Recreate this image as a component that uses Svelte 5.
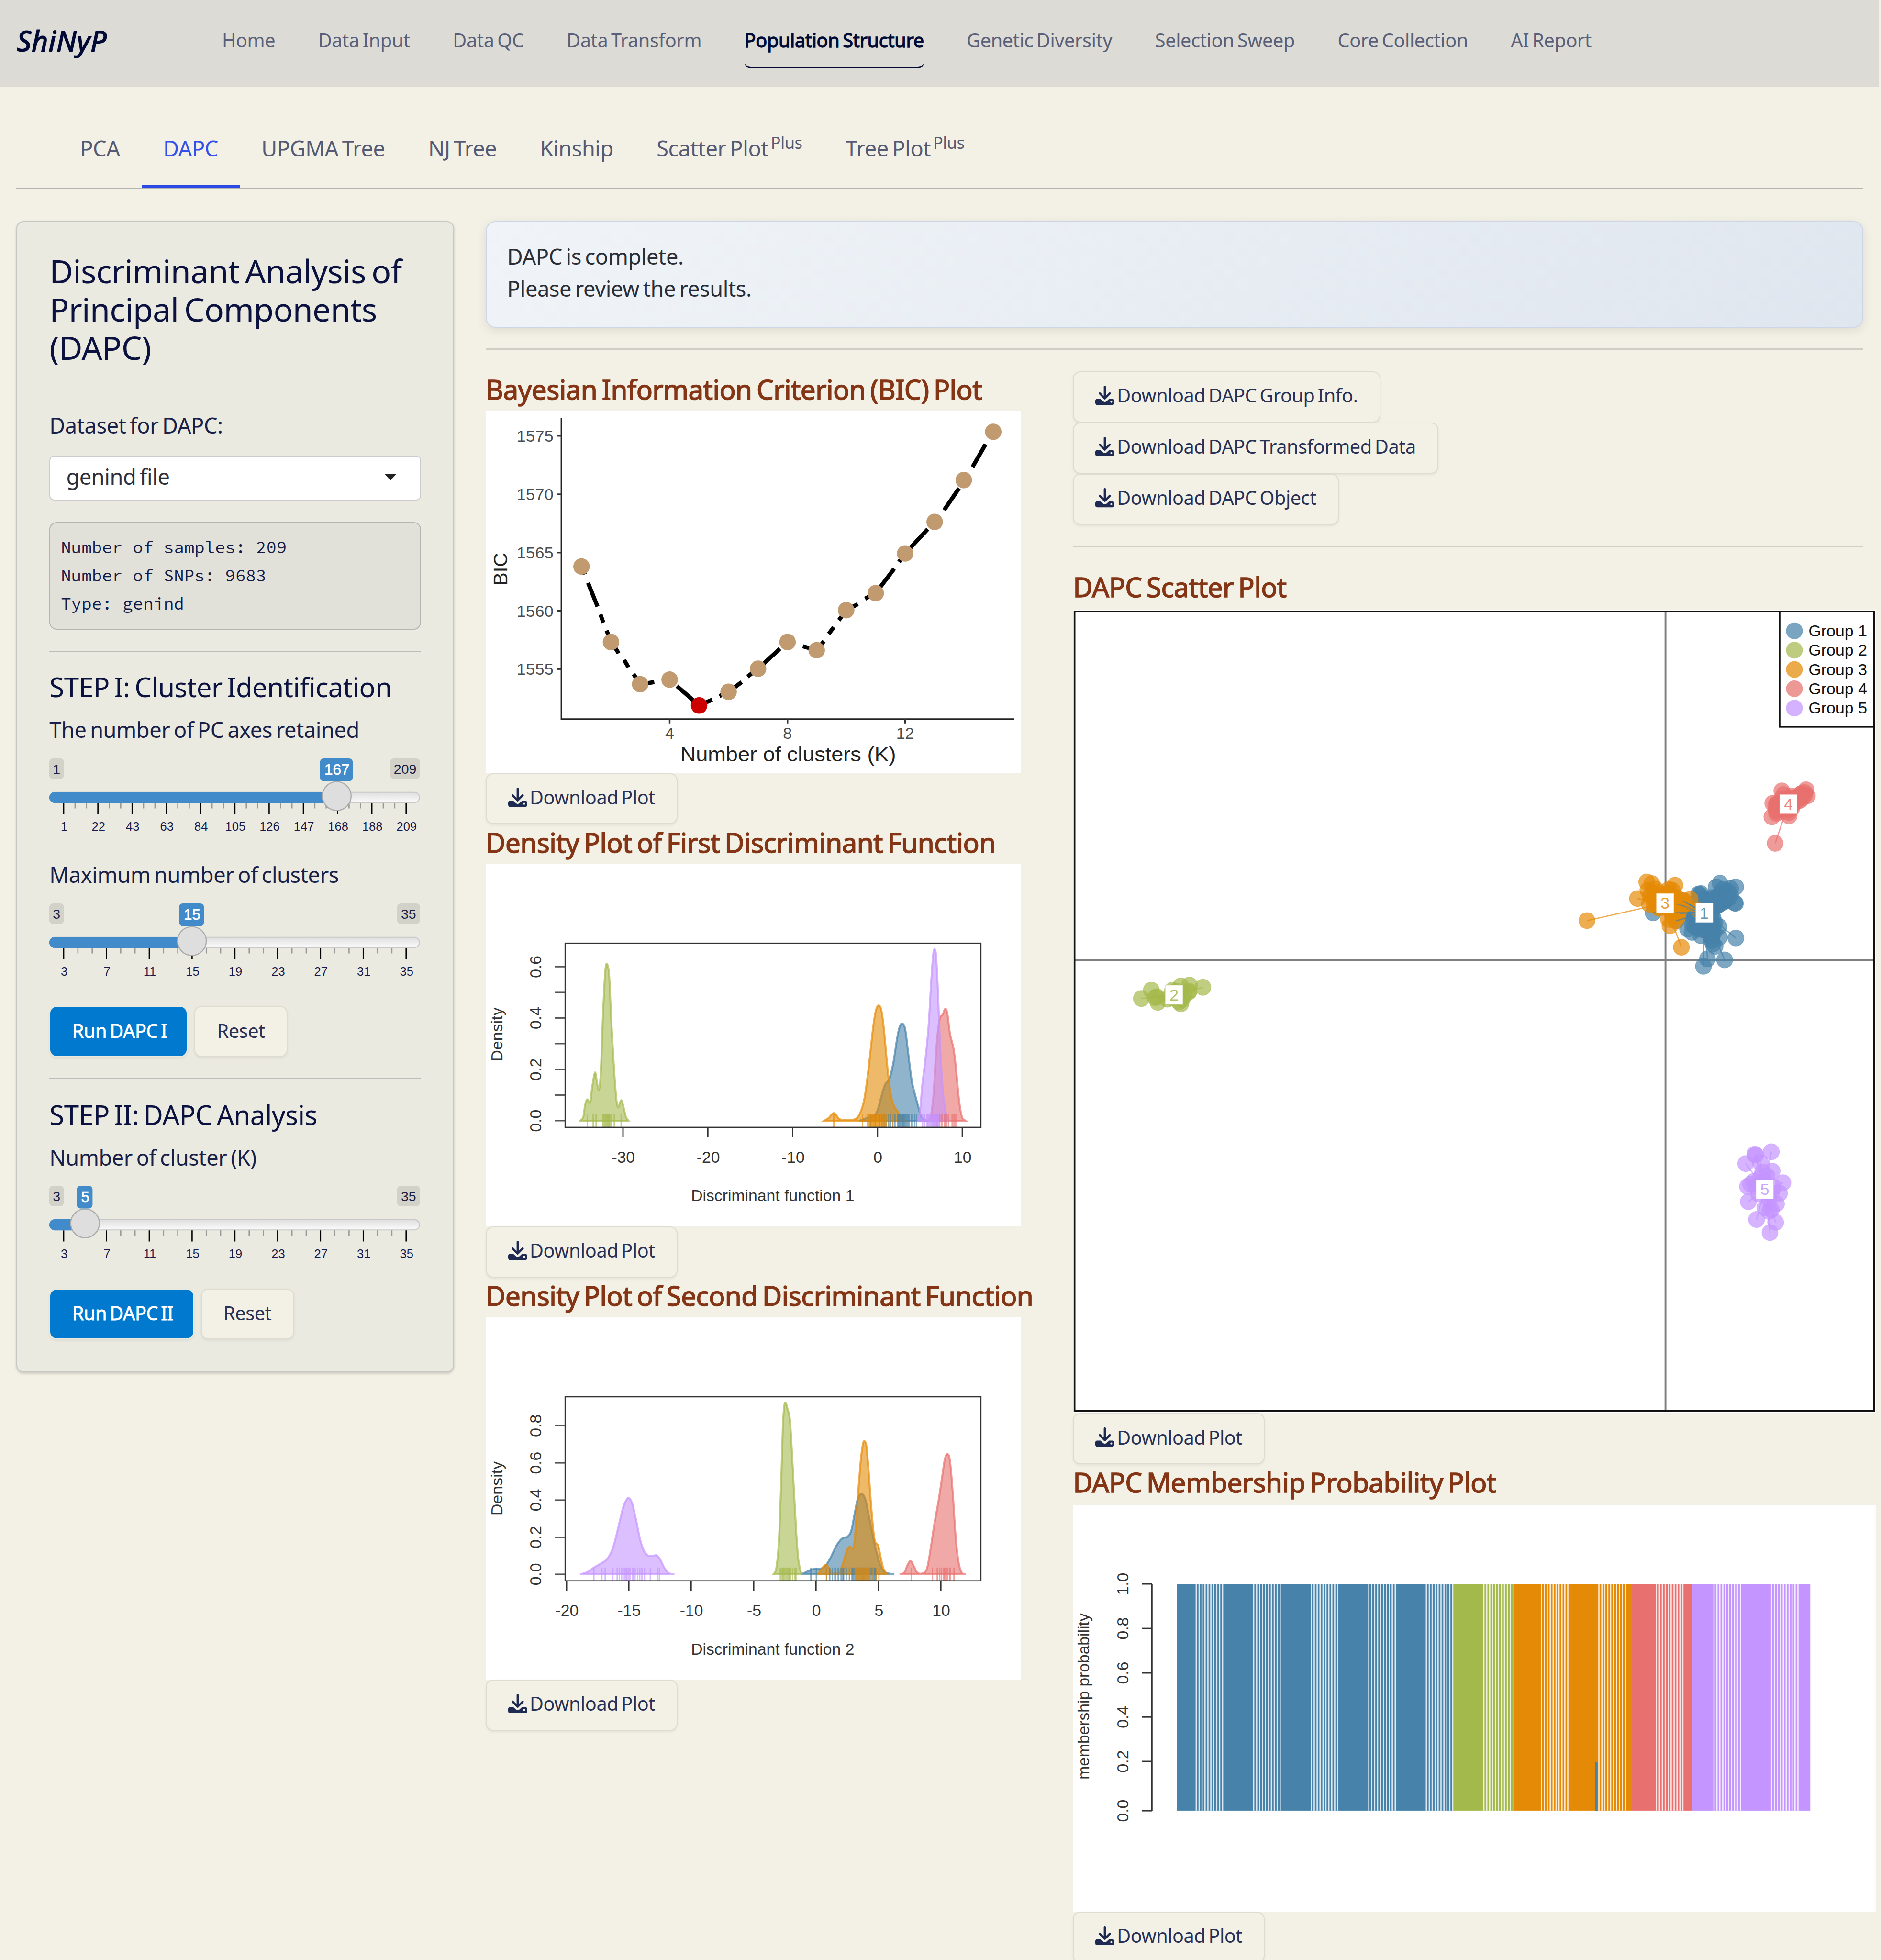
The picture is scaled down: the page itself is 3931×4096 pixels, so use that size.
<script>
  const nav = ['Home', 'Data Input', 'Data QC', 'Data Transform', 'Population Structure', 'Genetic Diversity', 'Selection Sweep', 'Core Collection', 'AI Report'];
  const tabs = [
    { name: 'PCA' }, { name: 'DAPC' }, { name: 'UPGMA Tree' }, { name: 'NJ Tree' }, { name: 'Kinship' },
    { name: 'Scatter Plot', sup: 'Plus' }, { name: 'Tree Plot', sup: 'Plus' }
  ];

  const pcAxes = { min: '1', max: '209', value: '167', at: 230, tag: 26.2, minW: 11.7, maxW: 23.8, labels: [1, 22, 43, 63, 84, 105, 126, 147, 168, 188, 209] };
  const odd = [3, 7, 11, 15, 19, 23, 27, 31, 35];
  const maxClusters = { min: '3', max: '35', value: '15', at: 114.1, tag: 19.9, minW: 11.7, maxW: 18.3, labels: odd };
  const nCluster = { min: '3', max: '35', value: '5', at: 28.6, tag: 12.6, minW: 11.7, maxW: 18.3, labels: odd };

  const BLUE = '#4682a9', GREEN = '#a4b94c', ORANGE = '#e58a06', RED = '#e8706e', PURPLE = '#c494ff';
  const groups = [BLUE, GREEN, ORANGE, RED, PURPLE];

  // Affine map from plot grid units to canvas units.
  const mapper = (ox, oy, sx, sy) => ([x, y]) => [ox + x / sx, oy + y / sy];

  // Smooth curve through the points (Catmull-Rom converted to Béziers).
  function smooth(pts) {
    let d = `M${pts[0][0]} ${pts[0][1]}`;
    for (let i = 0; i < pts.length - 1; i++) {
      const p0 = pts[i - 1] ?? pts[i], p1 = pts[i], p2 = pts[i + 1], p3 = pts[i + 2] ?? p2;
      d += `C${p1[0] + (p2[0] - p0[0]) / 6} ${p1[1] + (p2[1] - p0[1]) / 6} ${p2[0] - (p3[0] - p1[0]) / 6} ${p2[1] - (p3[1] - p1[1]) / 6} ${p2[0]} ${p2[1]}`;
    }
    return d;
  }

  // BIC plot
  const bm = mapper(380.6, 290.6, 3.433, 4.12);
  const bicPts = [[291, 671], [372, 920], [452, 1059], [533, 1044], [614, 1129], [695, 1084], [776, 1008], [857, 920], [937, 947], [1018, 815], [1099, 759], [1180, 628], [1261, 524], [1341, 386], [1422, 227]].map(bm);
  const bicDashes = [
    [291, 671, 300, 697], [309, 725, 335, 803], [343, 829, 351, 856], [360, 882, 372, 920], [383, 938, 393, 957], [408, 979, 420, 1003],
    [434, 1026, 452, 1059], [452, 1059, 491, 1052], [553, 1065, 614, 1129], [614, 1129, 650, 1110], [670, 1098, 695, 1084],
    [695, 1084, 731, 1052], [747, 1034, 776, 1008], [776, 1008, 836, 942], [899, 934, 937, 947], [937, 947, 957, 917], [970, 893, 984, 871],
    [998, 848, 1018, 815], [1018, 815, 1050, 795], [1070, 777, 1099, 759], [1099, 759, 1150, 678], [1163, 656, 1180, 628],
    [1180, 628, 1242, 548], [1287, 485, 1328, 413], [1365, 343, 1401, 268]
  ].map(([a, b, c, d]) => [...bm([a, b]), ...bm([c, d])]);
  const bicY = [[1575, 348.9], [1570, 395.7], [1565, 442.3], [1560, 488.9], [1555, 535.5]];
  const bicX = [[4, 535.9], [8, 630.2], [12, 724.3]];

  const range = (a, b, step) => Array.from({ length: Math.floor((b - a) / step) + 1 }, (_, i) => a + i * step);

  const d1 = mapper(380.6, 657.35, 3.433, 4.12);
  const d2 = mapper(380.6, 1020.6, 3.433, 4.12);
  const densities = [
    {
      title: 'Discriminant function 1', heading: 'Density Plot of First Discriminant Function', m: d1, top: 691.3,
      frame: [402, 1009], base: 987, mid: 703, caption: 1252, tickText: 1125, end: 1037,
      yTicks: [[987, '0.0'], [902.5, ''], [818, '0.2'], [733, ''], [648.5, '0.4'], [564, ''], [479.5, '0.6']],
      xTicks: [[405, '-30'], [638, '-20'], [871, '-10'], [1104, '0'], [1337, '10']],
      curves: [
        [BLUE, [[1055, 987], [1075, 978], [1095, 970], [1105, 950], [1115, 905], [1125, 868], [1137, 848], [1147, 800], [1158, 715], [1165, 677], [1172, 667], [1180, 685], [1188, 760], [1198, 855], [1208, 905], [1217, 945], [1225, 975], [1238, 987]]],
        [GREEN, [[288, 987], [296, 975], [301, 935], [307, 917], [315, 927], [320, 880], [328, 828], [334, 865], [339, 885], [344, 830], [350, 640], [356, 500], [361, 470], [367, 510], [372, 640], [380, 810], [387, 920], [392, 943], [396, 930], [401, 920], [407, 945], [413, 975], [420, 987]]],
        [ORANGE, [[958, 987], [970, 978], [984, 962], [998, 980], [1010, 985], [1040, 983], [1055, 965], [1068, 915], [1080, 810], [1092, 680], [1100, 622], [1108, 607], [1115, 625], [1122, 690], [1132, 820], [1141, 905], [1150, 940], [1160, 957], [1170, 978], [1182, 987]]],
        [RED, [[1240, 987], [1250, 975], [1258, 900], [1264, 780], [1270, 690], [1276, 647], [1283, 638], [1290, 618], [1296, 635], [1303, 700], [1313, 750], [1320, 820], [1328, 920], [1336, 975], [1346, 987]]],
        [PURPLE, [[1212, 987], [1220, 965], [1227, 870], [1236, 780], [1244, 680], [1252, 520], [1257, 440], [1261, 422], [1265, 445], [1270, 560], [1276, 740], [1283, 880], [1290, 950], [1300, 987]]]
      ],
      rugs: [
        [BLUE, [1085, 1098, ...range(1110, 1155, 6), ...range(1160, 1192, 2.4), 1197, 1201, 1206, 1211]],
        [GREEN, [307, 323, 331, ...range(349, 369, 2.5), 374, 381, 400]],
        [ORANGE, [984, 1063, 1077, ...range(1081, 1128, 2.6), 1136, 1146]],
        [RED, [1262, 1268, 1275, 1281, 1288, 1290, 1293, 1299, 1309, 1314, 1319]],
        [PURPLE, [1228, 1234, ...range(1240, 1274, 2.3)]]
      ]
    },
    {
      title: 'Discriminant function 2', heading: 'Density Plot of Second Discriminant Function', m: d2, top: 1053.9,
      frame: [399, 1006], base: 984, mid: 701, caption: 1249, tickText: 1122, end: 1040,
      yTicks: [[984, '0.0'], [862, '0.2'], [739.5, '0.4'], [617, '0.6'], [494, '0.8']],
      xTicks: [[250, '-20'], [421, '-15'], [592, '-10'], [764, '-5'], [935, '0'], [1107, '5'], [1278, '10']],
      curves: [
        [BLUE, [[895, 984], [915, 973], [930, 966], [945, 966], [960, 958], [975, 930], [990, 892], [1003, 870], [1013, 863], [1022, 860], [1032, 840], [1042, 780], [1050, 735], [1060, 719], [1070, 735], [1080, 790], [1090, 850], [1100, 905], [1112, 955], [1125, 978], [1150, 984]]],
        [GREEN, [[818, 984], [826, 965], [833, 880], [839, 700], [844, 500], [848, 430], [852, 419], [857, 440], [863, 470], [868, 560], [875, 720], [881, 850], [887, 940], [895, 984]]],
        [ORANGE, [[940, 984], [950, 968], [957, 957], [963, 953], [970, 962], [977, 976], [988, 983], [1000, 975], [1010, 945], [1020, 905], [1028, 893], [1038, 898], [1043, 850], [1050, 730], [1058, 610], [1064, 555], [1069, 546], [1074, 565], [1080, 650], [1088, 780], [1096, 870], [1106, 890], [1113, 930], [1120, 965], [1130, 984]]],
        [RED, [[1165, 984], [1178, 978], [1186, 955], [1195, 940], [1204, 958], [1213, 978], [1228, 981], [1240, 965], [1250, 900], [1260, 820], [1272, 740], [1282, 660], [1289, 605], [1296, 588], [1303, 610], [1311, 720], [1318, 850], [1326, 940], [1335, 978], [1346, 984]]],
        [PURPLE, [[287, 984], [305, 978], [325, 962], [345, 948], [362, 933], [378, 895], [392, 830], [405, 765], [414, 740], [421, 733], [430, 750], [440, 800], [452, 870], [463, 908], [475, 923], [488, 923], [498, 922], [507, 935], [518, 962], [530, 980], [546, 984]]]
      ],
      rugs: [
        [BLUE, [921, 936, 964, 973, 980, 987, 989, 996, 1004, 1009, 1011, 1018, 1027, ...range(1034, 1100, 3)]],
        [GREEN, [837, ...range(842, 866, 3), 871, 877, 880]],
        [ORANGE, [964, 1027, ...range(1044, 1085, 2.6), 1092, 1101, 1108]],
        [RED, [1197, 1255, 1268, 1275, 1280, 1286, 1289, 1293, 1297, 1302, 1304, 1314]],
        [PURPLE, [325, 347, 356, 377, 389, 395, 401, 405, 409, 413, 416, 420, 424, 431, 434, 438, 445, 451, 457, 464, 480, 500, 505]]
      ]
    }
  ];

  // Scatter plot
  const s1 = mapper(1210.9, 605.5, 5.665, 7.553);
  const s2 = mapper(899.5, 768.06, 2.887, 6.665);
  const clusters = [
    { n: 1, c: BLUE, at: s1([866, 942]), pts: [[634, 942], [937, 763], [920, 785], [1008, 785], [985, 795], [1007, 885], [1003, 882], [840, 828], [850, 825], [845, 835], [935, 830], [960, 815], [975, 830], [978, 850], [940, 860], [900, 850], [880, 880], [920, 900], [940, 885], [960, 870], [800, 940], [830, 900], [870, 930], [900, 940], [905, 970], [933, 1025], [905, 1010], [860, 1010], [830, 1000], [790, 1040], [810, 1060], [850, 1080], [870, 1050], [910, 1060], [935, 1090], [900, 1110], [905, 1130], [915, 1145], [880, 1220], [862, 1265], [958, 1226], [1009, 1094], [820, 1020], [810, 960], [770, 870], [755, 945], [760, 900], [950, 800], [930, 840], [880, 860], [860, 860], [920, 870], [960, 840], [950, 880], [890, 910], [850, 960], [880, 980], [890, 1030], [840, 1040], [895, 1080], [900, 1095], [738, 990], [735, 885], [870, 1000], [970, 810], [985, 835], [860, 1025], [900, 1050]].map(s1) },
    { n: 2, c: GREEN, at: s2([115.5, 185]), pts: [[40, 205], [63, 160], [76, 195], [78, 225], [100, 208], [112, 160], [131, 138], [151, 133], [182, 145], [149, 170], [131, 233], [127, 222], [138, 190], [110, 200], [150, 165], [72, 200], [120, 165], [134, 210]].map(s2) },
    { n: 3, c: ORANGE, at: s1([688, 883]), pts: [[605, 755], [628, 765], [733, 775], [705, 800], [563, 856], [610, 805], [617, 890], [660, 820], [700, 850], [740, 850], [640, 850], [645, 880], [660, 915], [700, 910], [730, 880], [760, 870], [802, 860], [760, 910], [745, 965], [735, 990], [710, 1020], [745, 950], [762, 1150], [334, 989], [690, 860], [780, 890], [620, 840], [650, 900], [735, 920], [700, 830], [640, 830], [750, 935], [840, 925], [660, 850], [730, 850]].map(s1) },
    { n: 4, c: RED, at: s1([1247, 285]), pts: [[1217, 205], [1327, 198], [1333, 235], [1305, 222], [1176, 280], [1190, 290], [1195, 330], [1172, 362], [1250, 356], [1260, 235], [1300, 262], [1262, 310], [1225, 300], [1320, 215], [1245, 322], [1187, 522], [1217, 255], [1280, 250], [1320, 230], [1192, 320], [1200, 290], [1270, 270], [1295, 240]].map(s1) },
    { n: 5, c: PURPLE, at: s2([1480, 1222]), pts: [[1457, 1035], [1459, 1040], [1495, 1022], [1436, 1085], [1470, 1080], [1497, 1125], [1475, 1130], [1485, 1150], [1470, 1160], [1447, 1195], [1440, 1207], [1460, 1210], [1522, 1187], [1514, 1243], [1507, 1300], [1442, 1288], [1480, 1230], [1500, 1210], [1490, 1280], [1480, 1320], [1495, 1330], [1490, 1340], [1461, 1383], [1505, 1398], [1492, 1453], [1455, 1180], [1465, 1245], [1478, 1180], [1495, 1240], [1480, 1200]].map(s2) }
  ];
  // The cores of groups 1, 3 and 4 are packed: halfway points fill them in.
  for (const g of [clusters[0], clusters[2], clusters[3]]) {
    const [cx, cy] = g.at;
    g.pts = g.pts.concat(g.pts.filter(([x, y]) => Math.hypot(x - cx, y - cy) < 22).map(([x, y]) => [x * 0.72 + cx * 0.28, y * 0.72 + cy * 0.28]));
  }

  // Membership probability plot
  const bx = (x) => 847.6 + x / 2.3853;
  const bars = [[BLUE, 225, 751.5], [GREEN, 751.5, 866.5], [ORANGE, 866.5, 1093], [RED, 1093, 1208], [PURPLE, 1208, 1433.5]].map(([c, a, b]) => [c, bx(a), bx(b)]);
  const gaps = range(0, 10, 1).flatMap((g) => range(0, 9, 1).map((i) => bx(261.5 + g * 109.8 + i * 5.6)));
  const probTicks = [['1.0', 1267.4], ['0.8', 1303], ['0.6', 1338.6], ['0.4', 1373.9], ['0.2', 1409.4], ['0.0', 1448.9]];
</script>

{#snippet slider(s)}
  {@const step = 274 / (s.labels.length - 1)}
  <svg class="slider" viewBox="0 0 296.6 62">
    <rect x="0" y="0" width={s.minW} height="16.5" rx="3" class="tag" />
    <text x={s.minW / 2} y="12.1" class="tag-text">{s.min}</text>
    <rect x={296.6 - s.maxW} y="0" width={s.maxW} height="16.5" rx="3" class="tag" />
    <text x={296.6 - s.maxW / 2} y="12.1" class="tag-text">{s.max}</text>
    {#each range(0, (s.labels.length - 1) * 3, 1) as i}
      {#if i % 3 === 0}
        <rect x={11 + (i * step) / 3} y="35.6" width="1" height="9" fill="#000" />
      {:else}
        <rect x={11 + (i * step) / 3} y="35.6" width="1" height="4.4" fill="#999" />
      {/if}
    {/each}
    {#each s.labels as l, i}
      <text x={11.9 + i * step} y="57.7" class="tick-text">{l}</text>
    {/each}
    <rect x=".4" y="27.1" width="295.8" height="8.2" rx="4.1" fill="url(#track)" stroke="#c8c8c8" stroke-width=".8" />
    <path d={`M4.4 26.8H${s.at}V35.7H4.4A4.4 4.4 0 0 1 4.4 26.8Z`} fill="#428bca" />
    <circle cx={s.at} cy="30.1" r="11.5" fill="#dedede" stroke="#ababab" stroke-width=".9" />
    <rect x={s.at - 0.3 - s.tag / 2} y="0" width={s.tag} height="18.2" rx="3" fill="#428bca" />
    <text x={s.at + 0.2} y="12.9" class="value-text">{s.value}</text>
  </svg>
{/snippet}

{#snippet download(label)}
  <button class="btn dl">
    <svg class="icon" viewBox="0 0 15.2 15.4">
      <path d="M1.6 10.5H4.1L6.3 12.5Q7.6 13.5 8.9 12.5L11.1 10.5H13.6Q15.2 10.5 15.2 12.1V13.8Q15.2 15.4 13.6 15.4H1.6Q0 15.4 0 13.8V12.1Q0 10.5 1.6 10.5Z" fill="#1f2a52" />
      <circle cx="12.8" cy="12.9" r=".8" fill="#f3f1e5" />
      <path d="M7.6 .8V9.6M3.6 6.2L7.6 10.2L11.6 6.2" fill="none" stroke="#1f2a52" stroke-width="1.7" stroke-linecap="round" stroke-linejoin="round" />
    </svg><span>{label}</span>
  </button>
{/snippet}

<div class="page">
  <header>
    <span class="brand">ShiNyP</span>
    <nav>
      {#each nav as n}<a class:active={n === 'Population Structure'}>{n}</a>{/each}
    </nav>
  </header>

  <div class="tabs">
    {#each tabs as t}
      <span class="tab" class:active={t.name === 'DAPC'}>{t.name}{#if t.sup}<sup>{t.sup}</sup>{/if}</span>
    {/each}
  </div>

  <main>
    <aside>
      <h3>Discriminant Analysis of Principal Components (DAPC)</h3>
      <div class="label first">Dataset for DAPC:</div>
      <div class="select"><span>genind file</span><i></i></div>
      <pre>Number of samples: 209
Number of SNPs: 9683
Type: genind</pre>
      <hr />
      <h4>STEP I: Cluster Identification</h4>
      <div class="label">The number of PC axes retained</div>
      {@render slider(pcAxes)}
      <div class="label later">Maximum number of clusters</div>
      {@render slider(maxClusters)}
      <div class="row"><button class="btn run">Run DAPC I</button><button class="btn">Reset</button></div>
      <hr />
      <h4>STEP II: DAPC Analysis</h4>
      <div class="label">Number of cluster (K)</div>
      {@render slider(nCluster)}
      <div class="row"><button class="btn run second">Run DAPC II</button><button class="btn">Reset</button></div>
    </aside>

    <section class="content">
      <div class="alert">DAPC is complete.<br />Please review the results.</div>
      <hr class="wide" />
      <div class="columns">
        <div class="left">
          <h5>Bayesian Information Criterion (BIC) Plot</h5>
          <svg class="plot" viewBox="388.7 328.7 428.3 289.8">
            <path d="M449.3 334.8V575.6H811.4" fill="none" stroke="#222" stroke-width="1.3" />
            {#each bicY as [v, y]}
              <path d={`M446 ${y}H449.3`} stroke="#333" stroke-width="1.3" />
              <text x="442.9" y={y + 4.7} text-anchor="end" font-size="13" textLength="29.4" fill="#4d4d4d">{v}</text>
            {/each}
            {#each bicX as [v, x]}
              <path d={`M${x} 575.6V579`} stroke="#333" stroke-width="1.3" />
              <text {x} y="591.3" text-anchor="middle" font-size="13" fill="#4d4d4d">{v}</text>
            {/each}
            <text transform="translate(405.9 455.6) rotate(-90)" text-anchor="middle" font-size="15.8" fill="#222">BIC</text>
            <text x="544.4" y="609.3" font-size="16.4" textLength="172.6" lengthAdjust="spacingAndGlyphs" fill="#222">Number of clusters (K)</text>
            {#each bicDashes as [a, b, c, d]}
              <line x1={a} y1={b} x2={c} y2={d} stroke="#000" stroke-width="3.3" />
            {/each}
            {#each bicPts as [x, y], i}
              <circle cx={x} cy={y} r="6.6" fill={i === 4 ? '#cd0000' : '#c19a70'} />
            {/each}
          </svg>
          {@render download('Download Plot')}

          {#each densities as p}
            <h5 class="next">{p.heading}</h5>
            <svg class="plot" viewBox={`388.7 ${p.top} 428.3 289.8`}>
              {#each p.curves as [c, pts]}
                <path d={smooth(pts.map(p.m)) + 'Z'} fill={c} fill-opacity=".6" stroke={c} stroke-opacity=".7" stroke-width="1.6" />
              {/each}
              {#each p.rugs as [c, xs]}
                {#each xs as x}
                  <line x1={p.m([x, 0])[0]} x2={p.m([x, 0])[0]} y1={p.m([0, p.frame[0] + 563])[1]} y2={p.m([0, p.frame[1]])[1]} stroke={c} stroke-opacity=".65" stroke-width="1.1" />
                {/each}
              {/each}
              <rect x="452.3" y={p.m([0, p.frame[0]])[1]} width="332.6" height="147.3" fill="none" stroke="#333" stroke-width="1" />
              {#each p.yTicks as [y, t]}
                <path d={`M444.1 ${p.m([0, y])[1]}H452.3`} stroke="#555" stroke-width="1.1" />
                <text transform={`translate(433.3 ${p.m([0, y])[1]}) rotate(-90)`} text-anchor="middle" font-size="12.9" fill="#333">{t}</text>
              {/each}
              {#each p.xTicks as [x, t]}
                <path d={`M${p.m([x, 0])[0]} ${p.m([0, p.frame[1]])[1]}v8`} stroke="#333" stroke-width="1.1" />
                <text x={p.m([x, 0])[0] + 0.3} y={p.m([0, p.tickText])[1]} text-anchor="middle" font-size="12.9" fill="#333">{t}</text>
              {/each}
              <text transform={`translate(402 ${p.m([0, p.mid])[1]}) rotate(-90)`} text-anchor="middle" font-size="12.9" textLength="43.3" fill="#333">Density</text>
              <text x="553" y={p.m([0, p.caption])[1]} font-size="12.9" textLength="130.7" fill="#333">{p.title}</text>
            </svg>
            {@render download('Download Plot')}
          {/each}
        </div>

        <div class="right">
          <div class="stack">
            {@render download('Download DAPC Group Info.')}
            {@render download('Download DAPC Transformed Data')}
            {@render download('Download DAPC Object')}
          </div>
          <hr class="mid" />
          <h5 class="scatter-title">DAPC Scatter Plot</h5>
          <svg class="plot square" viewBox="858.5 488 642.5 642.5">
            <path d="M1332.7 489V1129M860 767.9H1500" stroke="#000" stroke-opacity=".5" stroke-width="1.5" />
            {#each clusters as g}
              {#each g.pts as [x, y]}
                <circle cx={x} cy={y} r="6.5" fill={g.c} fill-opacity=".7" stroke={g.c} stroke-opacity=".5" stroke-width=".4" />
              {/each}
            {/each}
            {#each clusters as g}
              {#each g.pts as [x, y]}
                <line x1={g.at[0]} y1={g.at[1]} x2={x} y2={y} stroke={g.c} stroke-opacity=".7" stroke-width="1" />
              {/each}
            {/each}
            {#each clusters as g}
              <rect x={g.at[0] - 7.1} y={g.at[1] - 7.8} width="14.2" height="15.6" fill="#fff" stroke={g.c} stroke-opacity=".5" stroke-width=".5" />
              <text x={g.at[0]} y={g.at[1] + 4.6} text-anchor="middle" font-size="12.9" fill={g.c} fill-opacity=".85">{g.n}</text>
            {/each}
            <rect x="859.9" y="489.1" width="639.6" height="639.6" fill="none" stroke="#111" stroke-width="1.4" />
            <rect x="1424.1" y="489.1" width="75.4" height="92.4" fill="#fff" stroke="#111" stroke-width="1.1" />
            {#each groups as c, i}
              <circle cx="1435.8" cy={504.6 + i * 15.45} r="6.7" fill={c} fill-opacity=".72" />
              <text x="1447.1" y={509 + i * 15.45} font-size="12.9" textLength="46.9" fill="#111">Group {i + 1}</text>
            {/each}
          </svg>
          {@render download('Download Plot')}
          <h5 class="prob-title">DAPC Membership Probability Plot</h5>
          <svg class="plot prob" viewBox="858.5 1204.2 642.5 325.3">
            {#each bars as [c, a, b]}
              <rect x={a} y="1267.7" width={b - a} height="181.1" fill={c} />
            {/each}
            {#each gaps as x}
              <rect x={x - 0.5} y="1267.7" width="1" height="181.1" fill="#fff" fill-opacity=".82" />
            {/each}
            <rect x="1276.4" y="1410" width="2" height="38.8" fill={BLUE} />
            <path d="M921.8 1267.4V1448.9" stroke="#333" stroke-width="1.1" />
            {#each probTicks as [t, y]}
              <path d={`M913.8 ${y}H921.8`} stroke="#333" stroke-width="1.1" />
              <text transform={`translate(902.8 ${y}) rotate(-90)`} text-anchor="middle" font-size="12.9" fill="#333">{t}</text>
            {/each}
            <text transform="translate(871.6 1357.4) rotate(-90)" text-anchor="middle" font-size="12.9" textLength="133" fill="#333">membership probability</text>
          </svg>
          {@render download('Download Plot')}
        </div>
      </div>
    </section>
  </main>
</div>

<svg class="defs" width="0" height="0">
  <linearGradient id="track" x1="0" y1="0" x2="0" y2="1">
    <stop offset="0" stop-color="#dfdfdf" />
    <stop offset="1" stop-color="#fbfbfb" />
  </linearGradient>
</svg>

<style>
  :global(body) { background: #f3f1e5; overflow: hidden; }
  .defs { position: absolute; }
  .page {
    zoom: 2.612;
    width: 1505px;
    height: 1568.1px;
    overflow: hidden;
    background: #f3f1e5;
    color: #1a2148;
    font-family: 'Noto Sans', sans-serif;
    font-size: 17.3px;
  }
  .page, nav, h3, h4, h5 { letter-spacing: -0.01em; word-spacing: -0.08em; }
  header {
    box-sizing: border-box;
    display: flex;
    align-items: flex-start;
    width: 1503.6px;
    height: 69.3px;
    padding: 20.1px 0 0 13.6px;
    background: #dcdbd5;
    line-height: 24px;
  }
  .brand {
    width: 164px;
    font-size: 22.5px;
    font-style: italic;
    letter-spacing: 0.45px;
    color: #000a35;
    -webkit-text-stroke: 0.7px #000a35;
  }
  nav { display: flex; gap: 34.25px; font-size: 15.2px; color: #5a6079; }
  nav a { white-space: nowrap; padding-bottom: 9px; border-bottom: 1.8px solid transparent; }
  nav a.active { color: #000a35; border-color: #000a35; border-radius: 5px; letter-spacing: -0.0095em; -webkit-text-stroke: 0.5px #000a35; }

  .tabs {
    display: flex;
    margin: 0 14px 0 12.9px;
    padding: 36.4px 0 0 33.8px;
    border-bottom: 1px solid #b4b4b2;
    color: #555b74;
    line-height: 26px;
  }
  .tab { padding: 0 17.3px 16.4px; border-bottom: 2.4px solid transparent; white-space: nowrap; }
  .tab.active { color: #3350ea; border-color: #2a4ae6; }
  sup { font-size: 13.2px; line-height: 0; vertical-align: 6.3px; margin-left: 1.8px; }

  main {
    display: grid;
    grid-template-columns: 350.5px 1102.3px;
    gap: 25.3px;
    align-items: start;
    padding: 25.6px 0 0 12.9px;
  }
  aside {
    padding: 24px 25.9px 25.8px;
    background: #eaeae0;
    border: 1px solid #c6c8c4;
    border-radius: 6px;
    box-shadow: 0 1px 2px rgba(0, 0, 0, 0.16);
  }
  h3, h4, h5 { margin: 0; font-weight: 400; }
  h3 { font-size: 26px; line-height: 30.5px; color: #0b1240; margin-right: -6px; }
  h4 { font-size: 21.6px; line-height: 26px; margin-top: 15.4px; color: #0b1240; }
  .label { line-height: 26px; margin: 8.1px 0 9.9px; }
  .label.first { margin: 34.3px 0 11.1px; }
  .label.later { margin-top: 18.1px; }
  .select {
    box-sizing: border-box;
    display: flex;
    align-items: center;
    justify-content: space-between;
    height: 36.1px;
    padding: 0 18.9px 2.6px 12.7px;
    background: #fff;
    border: 1px solid #cccccc;
    border-radius: 4px;
    color: #2d2f3a;
  }
  .select i {
    border: 4.6px solid transparent;
    border-top: 5px solid #222;
    border-bottom: 0;
    margin-top: 1.6px;
  }
  pre {
    box-sizing: border-box;
    height: 86.2px;
    margin: 17px 0 0;
    padding: 8.7px 8.4px;
    background: #e1e1d9;
    border: 1px solid #b4b5b4;
    border-radius: 6px;
    font: 13.7px/22.5px 'Source Code Pro', 'Noto Sans Mono', 'DejaVu Sans Mono', monospace;
    letter-spacing: 0;
    word-spacing: 0;
    color: #151c48;
  }
  hr { height: 1px; margin: 16.8px 0 0; border: 0; background: #bcbcb8; }
  hr.wide { margin-top: 16.7px; background: #cfcfc7; }
  hr.mid { width: 632.3px; margin-top: 17.2px; background: #cfcfc7; }
  .row { display: flex; gap: 5.2px; margin-top: 20px; }
  .row .btn { padding-bottom: 1.5px; }
  .btn {
    box-sizing: border-box;
    display: flex;
    align-items: center;
    width: max-content;
    height: 40.8px;
    padding: 0 17.4px 2.4px;
    background: #f3f1e5;
    border: 1px solid #dedccf;
    border-radius: 6px;
    box-shadow: 0 1px 2px rgba(0, 0, 0, 0.06);
    color: #2a3157;
    font: 15.2px 'Noto Sans', sans-serif;
    letter-spacing: -0.012em;
    word-spacing: -0.09em;
    white-space: nowrap;
  }
  .btn.run { width: 110.7px; background: #0079cf; border-color: #eaeae0; color: #fff; -webkit-text-stroke: 0.3px #fff; }
  .btn.run.second { width: 115.9px; }
  .dl { padding-left: 17px; padding-right: 17.2px; margin-top: 0.2px; }
  .icon { width: 15.2px; height: 15.4px; margin-right: 2.2px; }
  .slider { display: block; width: 296.6px; height: 62px; overflow: visible; }
  text { font-family: 'Liberation Sans', Arial, sans-serif; word-spacing: 0; letter-spacing: 0; }
  .tag { fill: #d2d2c8; }
  .tag-text { font-size: 10.9px; text-anchor: middle; fill: #1a2148; }
  .tick-text { font-size: 9.8px; text-anchor: middle; fill: #1a1a4c; }
  .value-text { font-size: 12px; text-anchor: middle; fill: #fff; stroke: #fff; stroke-width: 0.25px; }

  .content { min-width: 0; }
  .alert {
    box-sizing: border-box;
    height: 85.4px;
    padding: 15px 16.3px;
    background: linear-gradient(135deg, #f0f4f8, #e0e6ef);
    border: 1px solid #ccd6e6;
    border-radius: 8px;
    box-shadow: 0 2px 8px rgba(0, 0, 0, 0.09);
    line-height: 25.6px;
    color: #2c2e36;
  }
  .columns { display: grid; grid-template-columns: 428.3px 642.5px; gap: 41.5px; align-items: start; }
  h5 { font-size: 21.65px; line-height: 26px; color: #843515; white-space: nowrap; margin: 18.6px 0 4.2px; -webkit-text-stroke: 0.6px #843515; }
  h5.next { margin-top: 1.6px; }
  h5.scatter-title { margin: 18.8px 0 5.1px; }
  h5.prob-title { margin: 1.4px 0 5.1px; }
  .stack { padding-top: 17.1px; }
  .plot { display: block; width: 428.3px; height: 289.8px; background: #fff; }
  .plot.square { width: 642.5px; height: 642.5px; }
  .plot.prob { width: 642.5px; height: 325.3px; }
</style>
